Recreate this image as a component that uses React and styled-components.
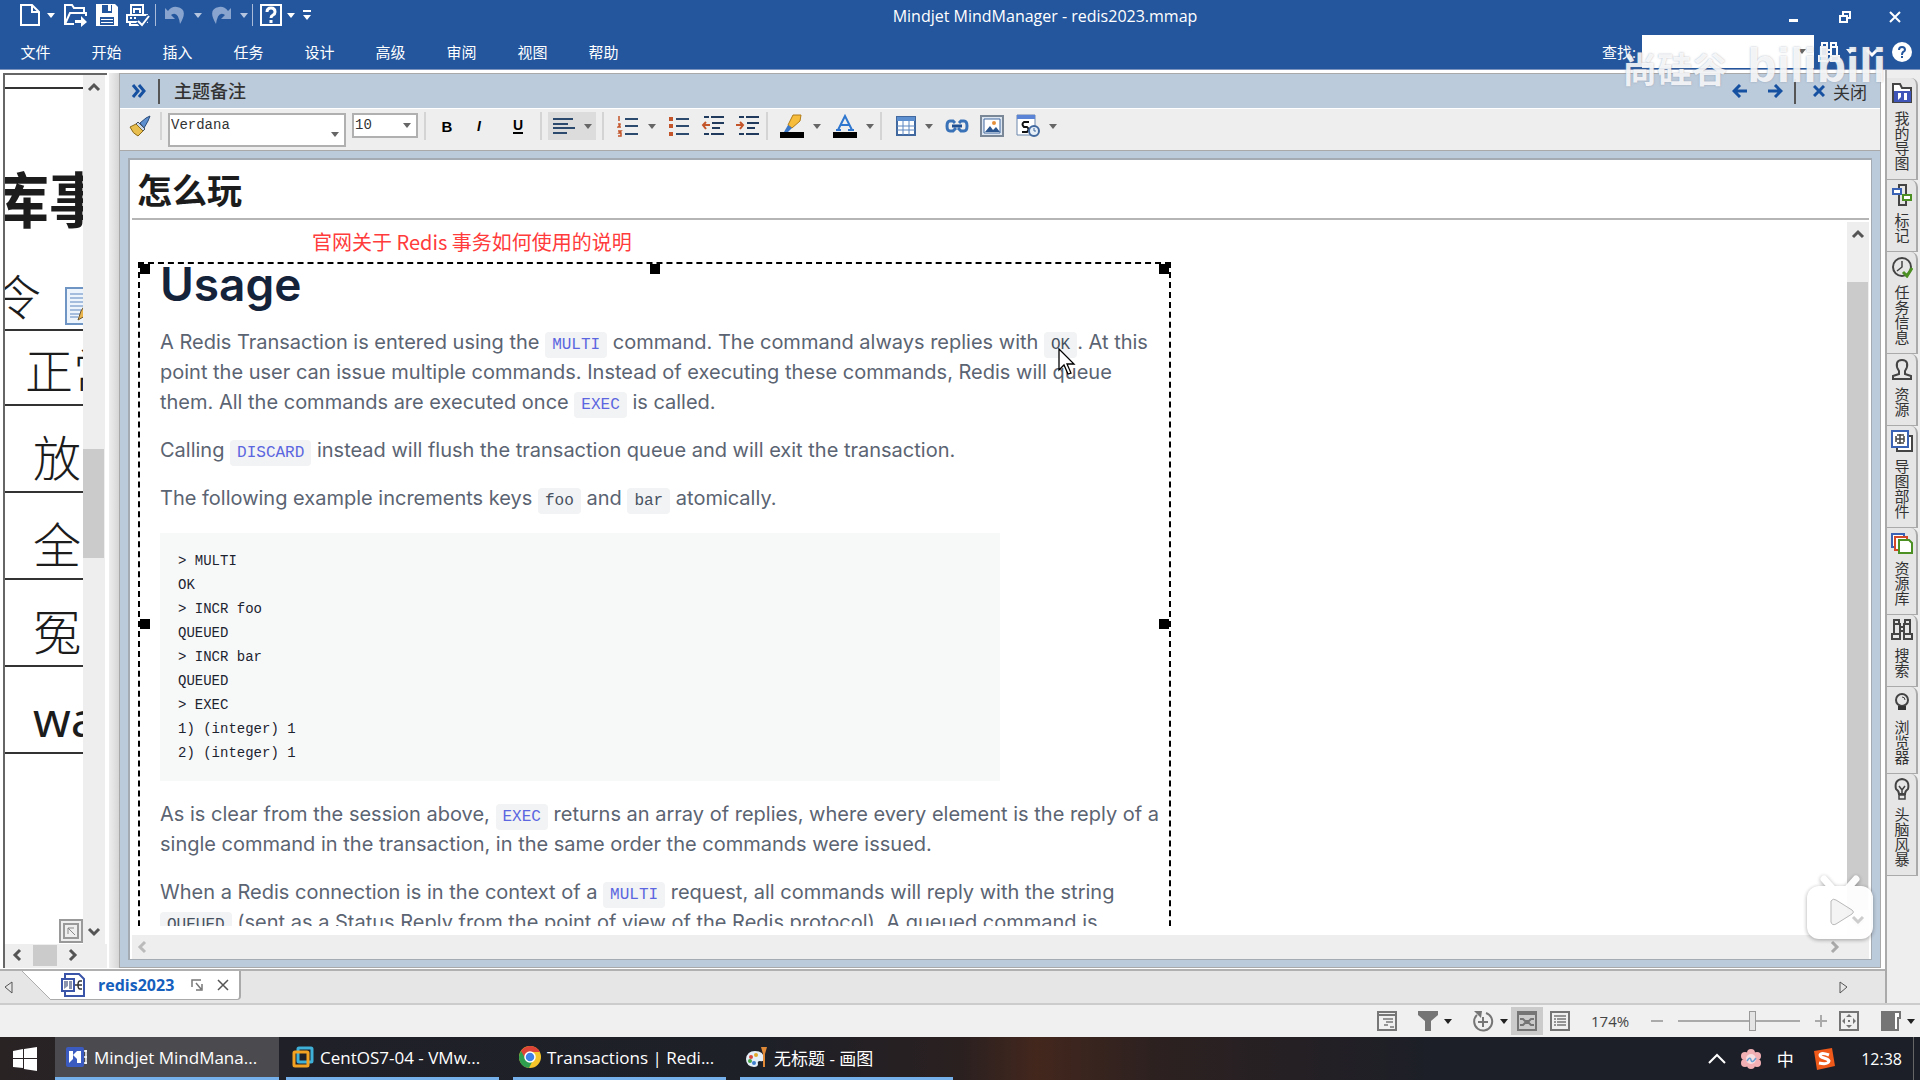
import React from 'react'
import styled, { createGlobalStyle } from 'styled-components'

const ui = '"Open Sans", "Noto Sans CJK SC", sans-serif'
const mono = '"Liberation Mono", "Noto Sans CJK SC", monospace'

export default function App() {
  return (
    <Page>
      <GlobalStyle />
      <TopBar />
      <Workspace>
        <Main>
          <Panes>
            <MapPane />
            <Splitter />
            <NotesPane />
          </Panes>
          <TabStrip />
        </Main>
        <SideTabs />
      </Workspace>
      <StatusBar />
      <TaskBar />
    </Page>
  )
}

function Caret({ color = '#666' }) {
  return (
    <svg width="8" height="5" viewBox="0 0 8 5"><path d="M0 0h8L4 5z" fill={color} /></svg>
  )
}

function Chevron({ dir = 'up', color = '#555' }) {
  const d = {
    up: 'M2 9l5-5 5 5',
    down: 'M2 5l5 5 5-5',
    left: 'M9 2L4 7l5 5',
    right: 'M5 2l5 5-5 5',
  }[dir]
  return (
    <svg width="14" height="14" viewBox="0 0 14 14"><path d={d} fill="none" stroke={color} strokeWidth="3" /></svg>
  )
}

/* ---------- title and menu ---------- */

const menus = ['文件', '开始', '插入', '任务', '设计', '高级', '审阅', '视图', '帮助']

function TopBar() {
  return (
    <Header>
      <TitleRow>
        <Quick>
          <QuickBtn w={24} aria-label="新建">
            <svg width="22" height="24" viewBox="0 0 22 24"><path d="M2 2h11l7 7v13H2zM13 2v7h7" fill="none" stroke="#fff" strokeWidth="2" /></svg>
          </QuickBtn>
          <QuickBtn w={18} aria-label="新建选项"><Caret color="#fff" /></QuickBtn>
          <QuickBtn w={31} aria-label="打开">
            <svg width="25" height="24" viewBox="0 0 25 24">
              <path d="M11 21H2V2h7l2 3h10v5M2 21l5-11h16v3" fill="none" stroke="#fff" strokeWidth="2" />
              <path d="M12 17h6v-4l6 6-6 5v-4h-6z" fill="#fff" />
            </svg>
          </QuickBtn>
          <QuickBtn w={31} aria-label="保存">
            <svg width="24" height="24" viewBox="0 0 24 24">
              <path d="M1 1h19l3 3v19H1z" fill="#fff" />
              <path d="M7 2h10v8H7zM5 14h14v8H5z" fill="#24569d" />
              <path d="M13 2h3v6h-3zM6 16h12v1H6zM6 19h12v1H6z" fill="#fff" />
            </svg>
          </QuickBtn>
          <QuickBtn w={31} aria-label="打印">
            <svg width="25" height="24" viewBox="0 0 25 24">
              <path d="M6 11V2h12v9M9 10V6h6v4M2 12h20v7H2zM5 19v3h9M5 15h2M9 15h2" fill="none" stroke="#fff" strokeWidth="2" />
              <path d="M13 18l4 4 7-9" fill="none" stroke="#24569d" strokeWidth="5" />
              <path d="M13 18l4 4 7-9" fill="none" stroke="#fff" strokeWidth="2" />
            </svg>
          </QuickBtn>
          <QuickSep />
          <QuickBtn w={34} aria-label="撤消">
            <svg width="22" height="20" viewBox="0 0 22 20"><path d="M1 3v11h10L7 10q7-5 9 9 9-15-3-17-5-1-9 4z" fill="#89a5cf" /></svg>
          </QuickBtn>
          <QuickBtn w={12} aria-label="撤消选项"><Caret color="#b5c5e0" /></QuickBtn>
          <QuickBtn w={34} aria-label="恢复">
            <svg width="22" height="20" viewBox="0 0 22 20"><path d="M21 3v11H11l4-4Q8 5 6 19-3 4 9 2q5-1 9 4z" fill="#89a5cf" /></svg>
          </QuickBtn>
          <QuickBtn w={12} aria-label="恢复选项"><Caret color="#b5c5e0" /></QuickBtn>
          <QuickSep />
          <QuickBtn w={32} aria-label="帮助主题">
            <svg width="24" height="24" viewBox="0 0 24 24">
              <path d="M2 2h20v20H2z" fill="none" stroke="#fff" strokeWidth="2" />
              <path d="M8 9q0-4 4-4t4 4q0 2-2 3t-2 3M12 17v3" fill="none" stroke="#fff" strokeWidth="3" />
            </svg>
          </QuickBtn>
          <QuickBtn w={8} aria-label="帮助选项"><Caret color="#fff" /></QuickBtn>
          <QuickBtn w={24} aria-label="自定义工具栏">
            <svg width="8" height="10" viewBox="0 0 8 10"><path d="M0 0h8v2H0zM0 5h8L4 10z" fill="#fff" /></svg>
          </QuickBtn>
        </Quick>
        <AppTitle>Mindjet MindManager - redis2023.mmap</AppTitle>
        <WinBtn aria-label="最小化">
          <svg width="14" height="14" viewBox="0 0 14 14"><path d="M1 9h9v3H1z" fill="#fff" /></svg>
        </WinBtn>
        <WinBtn aria-label="还原">
          <svg width="14" height="14" viewBox="0 0 14 14"><path d="M2 6h7v6H2zM5 5V2h7v6H9" fill="none" stroke="#fff" strokeWidth="2" /></svg>
        </WinBtn>
        <WinBtn aria-label="关闭窗口">
          <svg width="14" height="14" viewBox="0 0 14 14"><path d="M2 2l10 10M12 2L2 12" stroke="#fff" strokeWidth="2" /></svg>
        </WinBtn>
      </TitleRow>
      <MenuRow>
        <Menu>
          {menus.map((m) => <MenuItem key={m}>{m}</MenuItem>)}
        </Menu>
        <FindLabel htmlFor="find">查找:</FindLabel>
        <FindBox>
          <FindInput id="find" type="text" />
          <FindCaret><Caret /></FindCaret>
        </FindBox>
        <QuickBtn w={30} aria-label="搜索">
          <svg width="22" height="22" viewBox="0 0 22 22">
            <path d="M4 2h5v4H4zM13 2h5v4h-5zM3 6h6v9H3zM13 6h6v9h-6zM1 15h8v5H1zM13 15h8v5h-8zM9 9h4v4H9z" fill="none" stroke="#fff" strokeWidth="2" />
          </svg>
        </QuickBtn>
        <QuickBtn w={12} aria-label="搜索选项"><Caret color="#fff" /></QuickBtn>
        <QuickBtn w={32} aria-label="折叠功能区"><Chevron dir="down" color="#fff" /></QuickBtn>
        <QuickBtn w={28} aria-label="帮助">
          <svg width="20" height="20" viewBox="0 0 20 20">
            <circle cx="10" cy="10" r="10" fill="#fff" />
            <path d="M7 8q0-3 3-3t3 3q0 1-2 2-1 1-1 3M10 14v2" fill="none" stroke="#24569d" strokeWidth="2" />
          </svg>
        </QuickBtn>
      </MenuRow>
      <Watermark>
        <Author>尚硅谷</Author>
        <Brand>bilibili</Brand>
      </Watermark>
    </Header>
  )
}

/* ---------- map on the left ---------- */

function MapPane() {
  return (
    <Map>
      <MapBody>
        <MapView>
          <MapRow h={14} />
          <MapRow h={242}>
            <MapTitle>库事</MapTitle>
            <MapSub>
              令
              <svg width="30" height="38" viewBox="0 0 30 38">
                <path d="M1 1h28v36H1z" fill="#eef4fb" stroke="#6f95c4" strokeWidth="2" />
                <path d="M5 7h20M5 11h20M5 15h20M5 19h18M5 23h14M5 27h10M5 30h8" stroke="#5b86c0" />
                <path d="M13 33l3-9 8-12 5 4-9 13z" fill="#e9b44c" stroke="#6b5530" />
              </svg>
            </MapSub>
          </MapRow>
          <MapRow h={75} x={20}>正常</MapRow>
          <MapRow h={87} x={28} low>放</MapRow>
          <MapRow h={87} x={28} low>全</MapRow>
          <MapRow h={87} x={28} low>冤</MapRow>
          <MapRow h={87} x={28} low latin>wa</MapRow>
          <Overview aria-label="导航">
            <svg width="24" height="24" viewBox="0 0 24 24">
              <path d="M1 1h22v22H1zM5 5h14v14H5z" fill="#eee" stroke="#999" strokeWidth="2" />
              <path d="M9 15V9h6M9 9l7 7" fill="none" stroke="#888" strokeWidth="1" />
            </svg>
          </Overview>
        </MapView>
        <VScroll>
          <ScrollBtn aria-label="向上滚动"><Chevron dir="up" /></ScrollBtn>
          <Space n={347} />
          <Thumb n={108} />
          <Space n={359} />
          <ScrollBtn aria-label="向下滚动"><Chevron dir="down" /></ScrollBtn>
        </VScroll>
      </MapBody>
      <MapHScroll>
        <ScrollBtn aria-label="向左滚动"><Chevron dir="left" /></ScrollBtn>
        <HThumb />
        <ScrollBtn aria-label="向右滚动"><Chevron dir="right" /></ScrollBtn>
      </MapHScroll>
    </Map>
  )
}

/* ---------- notes ---------- */

function NotesPane() {
  return (
    <Notes>
      <NotesHead>
        <HeadBtn w={38} aria-label="展开">
          <svg width="16" height="14" viewBox="0 0 16 14"><path d="M2 1l5 6-5 6M8 1l5 6-5 6" fill="none" stroke="#1650a0" strokeWidth="3" /></svg>
        </HeadBtn>
        <HeadSep />
        <HeadTitle>主题备注</HeadTitle>
        <HeadBtn w={32} aria-label="后退">
          <svg width="16" height="14" viewBox="0 0 16 14"><path d="M15 7H3M8 1L2 7l6 6" fill="none" stroke="#1650a0" strokeWidth="3" /></svg>
        </HeadBtn>
        <HeadBtn w={38} aria-label="前进">
          <svg width="16" height="14" viewBox="0 0 16 14"><path d="M1 7h12M8 1l6 6-6 6" fill="none" stroke="#1650a0" strokeWidth="3" /></svg>
        </HeadBtn>
        <HeadSep />
        <CloseBtn>
          <svg width="12" height="12" viewBox="0 0 12 12"><path d="M1 1l10 10M11 1L1 11" stroke="#1650a0" strokeWidth="3" /></svg>
          关闭
        </CloseBtn>
      </NotesHead>
      <FormatBar />
      <Frame>
        <Sheet>
          <TopicTitle>怎么玩</TopicTitle>
          <SheetBody>
            <Document />
            <VScroll>
              <ScrollBtn aria-label="备注向上滚动"><Chevron dir="up" /></ScrollBtn>
              <Space n={33} />
              <Thumb n={581} />
              <Grow />
              <ScrollBtn aria-label="备注向下滚动"><Chevron dir="down" color="#bbb" /></ScrollBtn>
            </VScroll>
          </SheetBody>
          <SheetHScroll>
            <ScrollBtn aria-label="备注向左滚动"><Chevron dir="left" color="#bbb" /></ScrollBtn>
            <ScrollBtn aria-label="备注向右滚动"><Chevron dir="right" color="#aaa" /></ScrollBtn>
          </SheetHScroll>
          <Player viewBox="0 0 72 68">
            <path d="M20 4l8 9M52 4l-8 9" stroke="#fff" strokeWidth="7" strokeLinecap="round" />
            <rect x="3" y="11" width="66" height="53" rx="12" fill="#fff" />
            <path d="M27 26q2-3 5-1l16 10q3 2 0 4L32 49q-4 2-5-2z" fill="#f4f4f4" stroke="#b5b5b5" strokeWidth="1" />
            <path d="M49 42l5 5 5-5" fill="none" stroke="#ccc" strokeWidth="3" />
          </Player>
        </Sheet>
      </Frame>
    </Notes>
  )
}

function FormatBar() {
  return (
    <Format>
      <Tool w={40} aria-label="格式刷">
        <svg width="22" height="22" viewBox="0 0 22 22">
          <path d="M21 1l-4 2-6 5 4 5 4-7z" fill="#5b8fd0" stroke="#2a4a78" />
          <path d="M9 7l7 7-2 2-7-7z" fill="#c9d8ea" stroke="#44505e" />
          <path d="M7 9l7 7-5 5q-5-2-8-9z" fill="#e8be4e" stroke="#8a6a1c" />
        </svg>
      </Tool>
      <Sep />
      <Picker w={178} tall>
        <PickerSelect aria-label="字体" tall><option>Verdana</option></PickerSelect>
        <PickerCaret><Caret /></PickerCaret>
      </Picker>
      <Picker w={66}>
        <PickerSelect aria-label="字号"><option>10</option></PickerSelect>
        <PickerCaret><Caret /></PickerCaret>
      </Picker>
      <Sep />
      <Tool w={30} aria-label="粗体"><Bold>B</Bold></Tool>
      <Tool w={34} aria-label="斜体"><Italic>I</Italic></Tool>
      <Tool w={44} aria-label="下划线"><Under>U</Under></Tool>
      <Sep />
      <Tool w={48} active aria-label="对齐">
        <svg width="22" height="18" viewBox="0 0 22 18"><path d="M0 2h20M0 7h15M0 11h22M0 16h14" stroke="#2b4a6e" strokeWidth="2" /></svg>
        <Caret />
      </Tool>
      <Sep />
      <Tool w={52} aria-label="编号列表">
        <svg width="22" height="22" viewBox="0 0 22 22">
          <path d="M2 1v5M1 9h2v1l-2 2h3M1 16h3l-2 2h2v3H1" fill="none" stroke="#c4552b" strokeWidth="1.5" />
          <path d="M8 4h13M8 11h13M8 19h13" stroke="#2b4a6e" strokeWidth="2" />
        </svg>
        <Caret />
      </Tool>
      <Tool w={34} aria-label="项目符号">
        <svg width="22" height="22" viewBox="0 0 22 22">
          <path d="M1 2h4v4H1zM1 9h4v4H1zM1 17h4v4H1z" fill="#c4552b" />
          <path d="M8 4h13M8 11h13M8 19h13" stroke="#2b4a6e" strokeWidth="2" />
        </svg>
      </Tool>
      <Tool w={34} aria-label="减少缩进">
        <svg width="24" height="22" viewBox="0 0 24 22">
          <path d="M3 2h5M10 2h13M11 8h12M11 13h8M3 19h5M10 19h13" stroke="#1f3a5c" strokeWidth="2" />
          <path d="M9 10H2M5 7l-3 3 3 4" fill="none" stroke="#c4552b" strokeWidth="2" />
        </svg>
      </Tool>
      <Tool w={36} aria-label="增加缩进">
        <svg width="24" height="22" viewBox="0 0 24 22">
          <path d="M3 2h5M10 2h13M11 8h12M11 13h8M3 19h5M10 19h13" stroke="#1f3a5c" strokeWidth="2" />
          <path d="M0 10h7M4 7l3 3-3 4" fill="none" stroke="#c4552b" strokeWidth="2" />
        </svg>
      </Tool>
      <Sep />
      <Tool w={52} aria-label="突出显示">
        <svg width="24" height="24" viewBox="0 0 24 24">
          <path d="M13 1h8l-1 6-8 7-4-3z" fill="#f6bd3c" stroke="#b07c18" />
          <path d="M8 11l4 3-4 4H4z" fill="#3c78c8" />
          <path d="M0 18h24v6H0z" />
        </svg>
        <Caret />
      </Tool>
      <Tool w={54} aria-label="字体颜色">
        <svg width="24" height="24" viewBox="0 0 24 24">
          <path d="M5 16l7-14 7 14M8 11h8M3 16h5M15 16h6" fill="none" stroke="#2f76cf" strokeWidth="2" />
          <path d="M0 18h24v6H0z" />
        </svg>
        <Caret />
      </Tool>
      <Sep />
      <Tool w={52} aria-label="表格">
        <svg width="20" height="20" viewBox="0 0 20 20">
          <path d="M1 1h18v18H1z" fill="#fff" stroke="#41699f" strokeWidth="2" />
          <path d="M1 1h18v4H1z" fill="#5b8fd0" />
          <path d="M1 10h18M1 14h18M7 5v14M13 5v14" stroke="#5b86c0" />
        </svg>
        <Caret />
      </Tool>
      <Tool w={34} aria-label="链接">
        <svg width="24" height="14" viewBox="0 0 24 14">
          <path d="M10 4L8 2H5Q2 2 2 7t3 5h3l3-3M14 4l2-2h3q3 0 3 5t-3 5h-3l-3-3" fill="none" stroke="#3a72b8" strokeWidth="3" />
          <path d="M7 7h10" stroke="#1f4f93" strokeWidth="3" />
        </svg>
      </Tool>
      <Tool w={36} aria-label="图像">
        <svg width="24" height="22" viewBox="0 0 24 22">
          <path d="M1 1h22v20H1z" fill="#dce6f2" stroke="#7a8796" strokeWidth="2" />
          <path d="M4 4h16v14H4z" fill="#fff" stroke="#41699f" />
          <circle cx="14" cy="8" r="2" fill="#e58f3a" />
          <path d="M5 17l5-6 3 4 3-3 4 5z" fill="#2b5690" />
        </svg>
      </Tool>
      <Tool w={52} aria-label="日期和时间">
        <svg width="24" height="24" viewBox="0 0 24 24">
          <path d="M1 1h18v20H1z" fill="#fff" stroke="#6d87ae" />
          <path d="M1 1h18v4H1z" fill="#5b84d6" />
          <path d="M13 8H8q-3 2 0 5h3q3 2 0 5H6" fill="none" stroke="#111" strokeWidth="2" />
          <circle cx="18" cy="17" r="5" fill="#e6eef8" stroke="#41699f" strokeWidth="2" />
          <path d="M18 14v3h2" fill="none" stroke="#41699f" />
        </svg>
        <Caret />
      </Tool>
    </Format>
  )
}

const session = `> MULTI
OK
> INCR foo
QUEUED
> INCR bar
QUEUED
> EXEC
1) (integer) 1
2) (integer) 1`

function Document() {
  return (
    <Doc>
      <RedNote>官网关于 Redis 事务如何使用的说明</RedNote>
      <Clip>
        <Heading>Usage</Heading>
        <Para>
          A Redis Transaction is entered using the <Code link>MULTI</Code> command. The command always replies with <Code>OK</Code>. At this<br />
          point the user can issue multiple commands. Instead of executing these commands, Redis will queue<br />
          them. All the commands are executed once <Code link>EXEC</Code> is called.
        </Para>
        <Para>Calling <Code link>DISCARD</Code> instead will flush the transaction queue and will exit the transaction.</Para>
        <Para>The following example increments keys <Code>foo</Code> and <Code>bar</Code> atomically.</Para>
        <Session>{session}</Session>
        <Para>
          As is clear from the session above, <Code link>EXEC</Code> returns an array of replies, where every element is the reply of a<br />
          single command in the transaction, in the same order the commands were issued.
        </Para>
        <Para>
          When a Redis connection is in the context of a <Code link>MULTI</Code> request, all commands will reply with the string<br />
          <Code>QUEUED</Code> (sent as a Status Reply from the point of view of the Redis protocol). A queued command is
        </Para>
        <Handle x={0} y={0} /><Handle x={0.5} y={0} /><Handle x={1} y={0} />
        <Handle x={0} y={0.5} /><Handle x={1} y={0.5} />
        <Pointer viewBox="0 0 18 28">
          <path d="M1 1v21l5-5 4 9 3-1-4-9h7z" fill="#fff" stroke="#000" strokeWidth="1.3" />
        </Pointer>
      </Clip>
    </Doc>
  )
}

/* ---------- tabs along the right edge ---------- */

const sideTabs = [
  ['我的导图', <><path d="M2 20V2h7l2 4h9v14z" fill="#fff" stroke="#444" strokeWidth="2" /><path d="M3 9h17v11H3z" fill="#3f55b8" /><path d="M7 11v7l3-3V11zM13 11v7h3v-7z" fill="#fff" /></>],
  ['标记', <><path d="M8 1h7v20H8z" fill="none" stroke="#444" strokeWidth="2" /><path d="M2 5h8v5H2z" fill="#fff" stroke="#3a62b5" strokeWidth="2" /><path d="M12 11h8v5h-8z" fill="#fff" stroke="#4c8f22" strokeWidth="2" /></>],
  ['任务信息', <><circle cx="11" cy="11" r="9" fill="none" stroke="#444" strokeWidth="2" /><path d="M11 5v6l-5 4" fill="none" stroke="#444" strokeWidth="1.5" /><path d="M12 16l4 4 5-8" fill="none" stroke="#4c8f22" strokeWidth="3" /></>],
  ['资源', <path d="M8 13q-3-4-2-8 1-3 5-3t5 3q1 4-2 8v3l6 2v3H2v-3l6-2z" fill="none" stroke="#444" strokeWidth="2" />],
  ['导图部件', <><path d="M6 6h15v15H6z" fill="#fff" stroke="#444" strokeWidth="2" /><path d="M1 1h16v16H1z" fill="#fff" stroke="#3a62b5" strokeWidth="2" /><path d="M6 5h7M5 9h8M6 13h7M5 6v6M9 4v10M13 6v6" stroke="#444" strokeWidth="1.5" /></>],
  ['资源库', <><path d="M1 2h12v13H1z" fill="#fff" stroke="#3a62b5" strokeWidth="2" /><path d="M4 5h12v13H4z" fill="#fff" stroke="#d24a2a" strokeWidth="2" /><path d="M8 8h10l3 3v10H8z" fill="#fff" stroke="#4c8f22" strokeWidth="2" /></>],
  ['搜索', <path d="M3 1h5v4H3zM14 1h5v4h-5zM3 5h6v10H3zM13 5h6v10h-6zM1 15h8v5H1zM13 15h8v5h-8zM9 8h4v4H9z" fill="none" stroke="#444" strokeWidth="2" />],
  ['浏览器', <><circle cx="11" cy="9" r="6" fill="none" stroke="#444" strokeWidth="2" /><path d="M11 6q3 0 3 3" fill="none" stroke="#444" /><path d="M7 15h8v4H7z" fill="#333" /></>],
  ['头脑风暴', <><path d="M8 16q0-3-3-5-2-9 6-10 8 1 6 10-3 2-3 5z" fill="none" stroke="#444" strokeWidth="2" /><path d="M8 8l3 4 3-4M11 12v4M8 17h6v4H8z" fill="none" stroke="#444" strokeWidth="1.5" /></>],
]

function SideTabs() {
  return (
    <Side>
      {sideTabs.map(([name, icon]) => (
        <SideTab key={name}>
          <svg width="22" height="22" viewBox="0 0 22 22">{icon}</svg>
          <SideName>{name}</SideName>
        </SideTab>
      ))}
    </Side>
  )
}

function TabStrip() {
  return (
    <Strip>
      <StripBtn w={22} aria-label="上一个标签">
        <svg width="9" height="13" viewBox="0 0 9 13"><path d="M8 1v11L1 6z" fill="none" stroke="#555" /></svg>
      </StripBtn>
      <Slant viewBox="0 0 30 30"><path d="M0 0h30v30z" fill="#fff" /><path d="M0 0l30 30" stroke="#aaa" /></Slant>
      <DocTab>
        <svg width="24" height="24" viewBox="0 0 24 24">
          <path d="M4 1h14l5 5v17H4z" fill="#fff" stroke="#3a55a8" strokeWidth="2" />
          <path d="M1 6h12v12H1z" fill="#fff" stroke="#3a55a8" strokeWidth="2" />
          <path d="M3 8v8l4-3V8zM8 8v8h3V8z" fill="#8a93ad" />
          <path d="M14 12h3M21 8h-2q-2 0-2 4t2 4h2M17 12h4" fill="none" stroke="#333" strokeWidth="1.5" />
        </svg>
        <DocName>redis2023</DocName>
        <svg width="12" height="12" viewBox="0 0 12 12"><path d="M1 8V1h9M5 4l5 6M11 5v6H5" fill="none" stroke="#777" strokeWidth="1.5" /></svg>
        <TabClose aria-label="关闭标签">
          <svg width="12" height="12" viewBox="0 0 12 12"><path d="M1 1l10 10M11 1L1 11" stroke="#555" strokeWidth="1.5" /></svg>
        </TabClose>
      </DocTab>
      <Grow />
      <StripBtn w={50} aria-label="下一个标签">
        <svg width="9" height="13" viewBox="0 0 9 13"><path d="M1 1v11l7-6z" fill="none" stroke="#555" /></svg>
      </StripBtn>
    </Strip>
  )
}

function StatusBar() {
  return (
    <Status>
      <StatusBtn w={28} aria-label="备注">
        <svg width="20" height="20" viewBox="0 0 20 20"><path d="M1 1h18v18H1zM1 4h18" fill="none" stroke="#777" strokeWidth="2" /><path d="M6 8h10M9 11h7M7 14h4M13 16h4" stroke="#777" strokeWidth="1.5" /></svg>
      </StatusBtn>
      <StatusBtn w={68} aria-label="筛选">
        <svg width="20" height="20" viewBox="0 0 20 20"><path d="M0 0h20v4l-7 6v10H7V10L0 4z" fill="#757575" /></svg>
        <Caret color="#222" />
      </StatusBtn>
      <StatusBtn w={42} aria-label="展开级别">
        <svg width="22" height="22" viewBox="0 0 22 22">
          <path d="M14 3a9 9 0 1 1-9 2M11 7v10M6 12h10" fill="none" stroke="#757575" strokeWidth="2" />
          <path d="M2 1h8l-1 7z" fill="#757575" />
        </svg>
        <Caret color="#222" />
      </StatusBtn>
      <StatusBtn w={32} active aria-label="导图视图">
        <svg width="20" height="20" viewBox="0 0 20 20"><path d="M1 1h18v18H1zM1 3h18" fill="none" stroke="#757575" strokeWidth="2" /><path d="M3 8h3l2 2h4l2-2h3M3 14h3l2-2h4l2 2h3" fill="none" stroke="#757575" strokeWidth="2" /><path d="M8 9h4v4H8z" fill="#757575" /></svg>
      </StatusBtn>
      <StatusBtn w={34} aria-label="大纲视图">
        <svg width="20" height="20" viewBox="0 0 20 20"><path d="M1 1h18v18H1z" fill="none" stroke="#757575" strokeWidth="2" /><path d="M4 5h12M4 8h2M7 8h9M4 11h2M7 11h9M4 14h2M7 14h9" stroke="#757575" strokeWidth="1.5" /></svg>
      </StatusBtn>
      <Percent htmlFor="zoom">174%</Percent>
      <StatusBtn w={28} aria-label="缩小"><svg width="12" height="12" viewBox="0 0 12 12"><path d="M0 6h12" stroke="#aaa" strokeWidth="2" /></svg></StatusBtn>
      <Slider id="zoom" type="range" min="0" max="100" defaultValue="62" />
      <StatusBtn w={28} aria-label="放大"><svg width="12" height="12" viewBox="0 0 12 12"><path d="M0 6h12M6 0v12" stroke="#aaa" strokeWidth="2" /></svg></StatusBtn>
      <StatusBtn w={28} aria-label="适合页面">
        <svg width="20" height="20" viewBox="0 0 20 20"><path d="M1 1h18v18H1z" fill="none" stroke="#757575" strokeWidth="2" /><path d="M10 3l3 3H7zM10 17l3-3H7zM3 10l3-3v6zM17 10l-3-3v6zM9 9h2v2H9z" fill="#757575" /></svg>
      </StatusBtn>
      <StatusGap />
      <StatusBtn w={44} aria-label="任务窗格">
        <svg width="20" height="20" viewBox="0 0 20 20"><path d="M0 0h12v20H0z" fill="#757575" /><path d="M13 1h6v6h-2v12h-4z" fill="#fff" stroke="#757575" strokeWidth="2" /></svg>
        <Caret color="#222" />
      </StatusBtn>
    </Status>
  )
}

function TaskBar() {
  return (
    <Tasks>
      <Start aria-label="开始菜单">
        <svg width="24" height="24" viewBox="0 0 24 24"><path d="M0 4l10-2v9H0zM11 2l13-2v11H11zM0 12h10v9L0 20zM11 12h13v12l-13-2z" fill="#fff" /></svg>
      </Start>
      <Task active>
        <svg width="22" height="22" viewBox="0 0 22 22"><rect y="1" width="18" height="20" rx="2" fill="#3b5bc0" /><path d="M3 5v12l4-4V5zM11 5v12h4V5zM7 9l4-4v8z" fill="#fff" /><path d="M18 5h3M18 11h3M18 17h3M20 4v14" stroke="#fff" strokeWidth="1.5" /></svg>
        Mindjet MindMana...
      </Task>
      <Task>
        <svg width="22" height="22" viewBox="0 0 22 22"><rect x="6" y="2" width="14" height="14" rx="1" fill="none" stroke="#3fb0d8" strokeWidth="3" /><rect x="2" y="6" width="14" height="14" rx="1" fill="none" stroke="#f3a321" strokeWidth="3" /></svg>
        CentOS7-04 - VMw...
      </Task>
      <Task>
        <svg width="22" height="22" viewBox="0 0 22 22">
          <circle cx="11" cy="11" r="11" fill="#f6c52b" />
          <path d="M11 11L6 21A11 11 0 0 1 2 5z" fill="#2f9e4f" />
          <path d="M2 5a11 11 0 0 1 19 1H11l-5 8z" fill="#dd4437" />
          <path d="M6 21L2 5l5 9 6 2-3 6z" fill="#2f9e4f" />
          <circle cx="11" cy="11" r="5" fill="#3f7fe8" stroke="#fff" strokeWidth="1.5" />
        </svg>
        Transactions | Redi...
      </Task>
      <Task>
        <svg width="22" height="22" viewBox="0 0 22 22">
          <path d="M9 5q9 0 9 8 0 3-4 2-3 0-2 3 0 3-4 3-8-1-8-8 1-8 9-8z" fill="#e4eef7" />
          <circle cx="5" cy="11" r="2" fill="#d9463b" /><circle cx="10" cy="9" r="2" fill="#e0a92d" /><circle cx="4" cy="15" r="2" fill="#48a548" /><circle cx="8" cy="17" r="2" fill="#3f7fd0" />
          <path d="M15 1h6l-2 7v13h-2V8z" fill="#e08a38" />
        </svg>
        无标题 - 画图
      </Task>
      <Grow />
      <Tray>
        <TrayBtn w={28} aria-label="显示隐藏的图标">
          <svg width="18" height="12" viewBox="0 0 18 12"><path d="M1 10l8-8 8 8" fill="none" stroke="#fff" strokeWidth="2" /></svg>
        </TrayBtn>
        <TrayBtn w={40} aria-label="输入法助手">
          <svg width="22" height="22" viewBox="0 0 22 22">
            <g fill="#f2b0b4"><circle cx="11" cy="5" r="4" /><circle cx="5" cy="8" r="4" /><circle cx="5" cy="15" r="4" /><circle cx="11" cy="17" r="4" /><circle cx="17" cy="15" r="4" /><circle cx="17" cy="8" r="4" /></g>
            <circle cx="11" cy="11" r="5" fill="#f7dfe2" /><path d="M7 13q3-5 4-1t5-2" fill="none" stroke="#6a9fd0" strokeWidth="1.5" />
          </svg>
        </TrayBtn>
        <TrayBtn w={28} aria-label="输入语言">中</TrayBtn>
        <TrayBtn w={50} aria-label="搜狗输入法">
          <svg width="22" height="22" viewBox="0 0 22 22"><path d="M1 3l18-3 3 18-18 4z" fill="#ef5a1a" /><path d="M16 7q-8-3-9 0 0 2 4 3t5 3q-1 4-10 2" fill="none" stroke="#fff" strokeWidth="3" /></svg>
        </TrayBtn>
        <Clock dateTime="12:38">12:38</Clock>
      </Tray>
    </Tasks>
  )
}

// styled-components

const GlobalStyle = createGlobalStyle`
  * { box-sizing: border-box; }
  body { margin: 0; font-family: ${ui}; }
  button {
    border: 0;
    padding: 0;
    background: none;
    font-family: inherit;
    color: inherit;
  }
  svg { display: block; flex-shrink: 0; }
`
const clean = (...names) => ({ shouldForwardProp: (p) => !names.includes(p) })

const Page = styled.div`
  height: 100vh;
  display: flex;
  flex-direction: column;
  overflow: hidden;
`
const Grow = styled.div`
  flex: 1;
`
const Header = styled.header`
  position: relative;
  flex-shrink: 0;
  color: #fff;
  background: #24569d;
  border-bottom: 1px solid #7c93bd;
`
const TitleRow = styled.div`
  display: flex;
  height: 34px;
`
const Quick = styled.div`
  display: flex;
  align-items: center;
  width: 320px;
  height: 30px;
  padding-left: 18px;
`
const QuickBtn = styled.button.withConfig(clean('w'))`
  width: ${(p) => p.w}px;
  display: flex;
  align-items: center;
  justify-content: center;
`
const QuickSep = styled.div`
  width: 1px;
  height: 22px;
  margin: 0 2px;
  background: #a9bbd9;
`
const AppTitle = styled.div`
  flex: 1;
  text-align: center;
  font-size: 16px;
  line-height: 32px;
`
const WinBtn = styled.button`
  width: 50px;
  display: flex;
  align-items: center;
  justify-content: center;
`
const MenuRow = styled.div`
  display: flex;
  align-items: center;
  height: 35px;
  padding-right: 4px;
`
const Menu = styled.nav`
  flex: 1;
  display: flex;
  gap: 40px;
  padding-left: 20px;
`
const MenuItem = styled.button`
  width: 31px;
  font-size: 15px;
  white-space: nowrap;
`
const FindLabel = styled.label`
  font-size: 15px;
  margin-right: 6px;
`
const FindBox = styled.div`
  position: relative;
  width: 172px;
  height: 33px;
`
const FindInput = styled.input`
  width: 100%;
  height: 100%;
  border: 0;
  background: #fff;
`
const FindCaret = styled.span`
  position: absolute;
  right: 8px;
  top: 14px;
`
const Watermark = styled.div`
  position: absolute;
  z-index: 2;
  right: 34px;
  top: 30px;
  display: flex;
  align-items: center;
  gap: 20px;
  color: rgba(255, 255, 255, 0.85);
  text-shadow: 0 0 2px rgba(120, 130, 150, 0.6);
  line-height: 64px;
`
const Author = styled.span`
  font-size: 35px;
  font-weight: bold;
  padding-top: 8px;
`
const Brand = styled.span`
  font: bold 48px/64px "Liberation Sans", sans-serif;
`
const Workspace = styled.div`
  flex: 1;
  min-height: 0;
  display: flex;
  background: #eee;
`
const Main = styled.main`
  flex: 1;
  min-width: 0;
  display: flex;
  flex-direction: column;
  border-right: 2px solid #aaa;
`
const Panes = styled.div`
  flex: 1;
  min-height: 0;
  display: flex;
  background: #fff;
  padding: 3px 4px 1px 3px;
`
const Map = styled.section`
  width: 104px;
  display: flex;
  flex-direction: column;
  border-left: 2px solid #666;
  border-top: 2px solid #666;
`
const MapBody = styled.div`
  flex: 1;
  min-height: 0;
  display: flex;
`
const MapView = styled.div`
  position: relative;
  width: 78px;
  overflow: hidden;
  color: #1c1c1c;
`
const MapRow = styled.div.withConfig(clean('h', 'x', 'low', 'latin'))`
  height: ${(p) => p.h}px;
  padding-left: ${(p) => p.x || 0}px;
  border-bottom: 2px solid #333;
  font-family: "Noto Sans", "Noto Sans CJK SC", sans-serif;
  font-weight: ${(p) => (p.latin ? 400 : 300)};
  font-size: 48px;
  line-height: ${(p) => (p.low ? p.h + 16 : p.h + 4)}px;
  white-space: nowrap;
  overflow: hidden;
`
const MapTitle = styled.div`
  margin: 66px 0 0 -16px;
  font-size: 60px;
  line-height: 90px;
  font-weight: bold;
`
const MapSub = styled.div`
  display: flex;
  align-items: flex-end;
  gap: 24px;
  margin: 24px 0 0 -12px;
  line-height: 56px;
`
const Overview = styled.button`
  position: absolute;
  right: 0;
  bottom: 1px;
`
const VScroll = styled.div`
  width: 22px;
  display: flex;
  flex-direction: column;
  padding: 2px 0;
  background: #eee;
`
const ScrollBtn = styled.button`
  width: 22px;
  height: 22px;
  display: flex;
  align-items: center;
  justify-content: center;
`
const Space = styled.div.withConfig(clean('n'))`
  flex: ${(p) => p.n} 1 0;
`
const Thumb = styled.div.withConfig(clean('n'))`
  flex: ${(p) => p.n} 1 0;
  width: 21px;
  background: #cbcbcb;
`
const MapHScroll = styled.div`
  height: 24px;
  display: flex;
  align-items: center;
  gap: 4px;
  padding: 0 0 2px 2px;
  background: #eee;
`
const HThumb = styled.div`
  width: 24px;
  height: 21px;
  background: #cbcbcb;
`
const Splitter = styled.div`
  width: 12px;
  background: linear-gradient(90deg, #fff 2px, #eee 2px, #d6d6d6);
`
const Notes = styled.section`
  flex: 1;
  min-width: 0;
  display: flex;
  flex-direction: column;
  border: 1px solid #a9a9a9;
  background: #bccbdb;
`
const NotesHead = styled.div`
  height: 35px;
  display: flex;
  align-items: center;
  border-bottom: 1px solid #fff;
`
const HeadBtn = styled.button.withConfig(clean('w'))`
  width: ${(p) => p.w}px;
  display: flex;
  align-items: center;
  justify-content: center;
`
const HeadSep = styled.div`
  width: 2px;
  height: 25px;
  background: #555;
`
const HeadTitle = styled.h2`
  flex: 1;
  margin: 0 0 0 14px;
  font-size: 18px;
  line-height: 24px;
  font-weight: 500;
  color: #333;
`
const CloseBtn = styled.button`
  display: flex;
  align-items: center;
  gap: 8px;
  padding: 0 13px 0 17px;
  font-size: 17px;
  color: #333;
`
const Format = styled.div`
  height: 42px;
  display: flex;
  align-items: flex-start;
  padding-top: 3px;
  background: #eee;
  border-bottom: 1px solid #a9a9a9;
`
const Sep = styled.div`
  width: 2px;
  height: 28px;
  margin-right: 6px;
  background: #d4d4d4;
`
const Tool = styled.button.withConfig(clean('w', 'active'))`
  width: ${(p) => p.w}px;
  height: 28px;
  display: flex;
  align-items: center;
  justify-content: center;
  gap: 9px;
  margin-right: ${(p) => (p.active ? 6 : 0)}px;
  background: ${(p) => (p.active ? '#dcdcdc' : 'none')};
`
const Picker = styled.div.withConfig(clean('w', 'tall'))`
  position: relative;
  width: ${(p) => p.w}px;
  height: ${(p) => (p.tall ? 34 : 25)}px;
  margin-right: 6px;
`
const PickerSelect = styled.select.withConfig(clean('tall'))`
  width: 100%;
  height: 100%;
  appearance: none;
  border: 2px solid #b0b0b0;
  border-radius: 0;
  background: #fff;
  padding: 0 0 ${(p) => (p.tall ? 10 : 0)}px 1px;
  font: 14px ${mono};
  color: #333;
`
const PickerCaret = styled.span`
  position: absolute;
  right: 7px;
  bottom: 9px;
  pointer-events: none;
`
const Bold = styled.b`
  font: bold 15px "Liberation Sans", sans-serif;
`
const Italic = styled.i`
  font: italic bold 14px "Liberation Sans", sans-serif;
`
const Under = styled.span`
  font: bold 14px/14px "Liberation Sans", sans-serif;
  border-bottom: 2px solid #000;
`
const Frame = styled.div`
  flex: 1;
  min-height: 0;
  display: flex;
  padding: 7px 8px;
`
const Sheet = styled.article`
  position: relative;
  flex: 1;
  min-width: 0;
  display: flex;
  flex-direction: column;
  padding: 0 2px;
  border: 2px solid #a5abb3;
  border-right-width: 1px;
  border-bottom-width: 1px;
  background: #fff;
`
const TopicTitle = styled.h1`
  margin: 0;
  padding: 4px 0 0 5px;
  border-bottom: 2px solid #b5b5b5;
  font-size: 35px;
  line-height: 54px;
  font-weight: bold;
  color: #1c1c1c;
`
const SheetBody = styled.div`
  flex: 1;
  min-height: 0;
  display: flex;
  padding-top: 2px;
`
const SheetHScroll = styled.div`
  height: 24px;
  display: flex;
  align-items: center;
  justify-content: space-between;
  padding-right: 24px;
  background: #eee;
`
const Doc = styled.div`
  flex: 1;
  min-width: 0;
  display: flex;
  flex-direction: column;
  margin-bottom: 9px;
  overflow: hidden;
`
const RedNote = styled.p`
  margin: 5px 0 5px 180px;
  font: 20px/30px "Noto Sans CJK SC", sans-serif;
  color: #ff3b3b;
`
const Clip = styled.div`
  position: relative;
  align-self: flex-start;
  width: 1033px;
  height: 724px;
  flex-shrink: 0;
  margin-left: 6px;
  padding: 0 20px;
  border: 2px dashed #000;
  color: #5b6472;
`
const Heading = styled.h2`
  margin: 0 0 23px;
  font: 600 46px/40px Inter, sans-serif;
  color: #14233a;
`
const Para = styled.p`
  margin: 0 0 18px;
  font: 20px/30px Inter, sans-serif;
  white-space: nowrap;
`
const Code = styled.code.withConfig(clean('link'))`
  padding: 4px 7px;
  border-radius: 4px;
  background: #f2f3f4;
  font: 16px/18px ${mono};
  color: ${(p) => (p.link ? '#5b66e0' : '#465160')};
`
const Session = styled.pre`
  width: 840px;
  margin: 20px 0 18px;
  padding: 16px 18px;
  background: #f7f9f9;
  font: 14px/24px ${mono};
  color: #1d2430;
`
const Handle = styled.span.withConfig(clean('x', 'y'))`
  position: absolute;
  left: calc((100% - 10px) * ${(p) => p.x});
  top: calc((100% - 10px) * ${(p) => p.y});
  width: 10px;
  height: 10px;
  background: #000;
`
const Pointer = styled.svg`
  position: absolute;
  left: 918px;
  top: 84px;
  width: 18px;
  height: 28px;
`
const Player = styled.svg`
  position: absolute;
  right: -5px;
  bottom: 16px;
  width: 72px;
  height: 68px;
  opacity: 0.95;
  filter: drop-shadow(0 1px 2px rgba(0, 0, 0, 0.35));
`
const Side = styled.aside`
  width: 33px;
  padding-top: 8px;
`
const SideTab = styled.button`
  display: flex;
  flex-direction: column;
  align-items: center;
  gap: 7px;
  width: 31px;
  padding: 4px 0 8px;
  border: 1px solid #aaa;
  border-width: 0 2px 1px 0;
  border-top-right-radius: 7px;
  background: #e6e6e6;
  color: #333;
`
const SideName = styled.span`
  writing-mode: vertical-rl;
  font: 15px/18px "Noto Sans CJK SC", sans-serif;
`
const Strip = styled.div`
  flex-shrink: 0;
  height: 34px;
  display: flex;
  align-items: flex-start;
  background: #e6e6e6;
  border-top: 2px solid #b0b0b0;
`
const StripBtn = styled.button.withConfig(clean('w'))`
  width: ${(p) => p.w}px;
  height: 32px;
  padding-left: 4px;
  display: flex;
  align-items: center;
`
const Slant = styled.svg`
  width: 29px;
  height: 29px;
`
const DocTab = styled.div`
  height: 29px;
  display: flex;
  align-items: center;
  padding: 0 10px;
  border: 1px solid #aaa;
  border-width: 0 2px 1px 0;
  border-bottom-right-radius: 4px;
  background: #fff;
`
const DocName = styled.span`
  margin: 0 17px 0 13px;
  font-size: 16px;
  font-weight: bold;
  color: #1660bd;
`
const TabClose = styled.button`
  margin-left: 14px;
`
const Status = styled.footer`
  flex-shrink: 0;
  height: 34px;
  display: flex;
  align-items: center;
  justify-content: flex-end;
  background: #f0f0f0;
  border-top: 2px solid #ccc;
`
const StatusBtn = styled.button.withConfig(clean('w', 'active'))`
  width: ${(p) => p.w}px;
  height: 28px;
  display: flex;
  align-items: center;
  justify-content: center;
  gap: 6px;
  background: ${(p) => (p.active ? '#cbcbcb' : 'none')};
`
const StatusGap = styled.div`
  width: 13px;
`
const Percent = styled.label`
  width: 66px;
  padding-left: 14px;
  font-size: 15px;
  color: #444;
`
const Slider = styled.input`
  appearance: none;
  width: 122px;
  height: 20px;
  margin: 0 7px;
  background: linear-gradient(#aaa, #aaa) center / 100% 2px no-repeat;
  &::-webkit-slider-thumb {
    appearance: none;
    width: 7px;
    height: 20px;
    border: 1px solid #999;
    background: #e4e4e4;
  }
`
const Tasks = styled.nav`
  flex-shrink: 0;
  height: 43px;
  display: flex;
  padding-right: 6px;
  background: linear-gradient(90deg, #2a2324, #1f2028 14%, #1e2028 40%, #2a2020 50%, #43271d 54%, #2d2120 60%, #1c1f28 75%);
`
const Start = styled.button`
  width: 55px;
  display: flex;
  align-items: center;
  padding-left: 13px;
`
const Task = styled.button.withConfig(clean('active'))`
  width: ${(p) => (p.active ? 224 : 213)}px;
  margin-right: ${(p) => (p.active ? 7 : 14)}px;
  padding-left: ${(p) => (p.active ? 11 : 6)}px;
  display: flex;
  align-items: center;
  gap: 6px;
  border-bottom: 3px solid #76b0ea;
  background: ${(p) => (p.active ? '#4b4b4f' : 'none')};
  color: #fff;
  font-size: 17px;
  white-space: nowrap;
`
const Tray = styled.div`
  display: flex;
  align-items: center;
  border-right: 1px solid #666;
  padding-right: 11px;
  color: #fff;
`
const TrayBtn = styled.button.withConfig(clean('w'))`
  width: ${(p) => p.w}px;
  display: flex;
  align-items: center;
  justify-content: center;
  font-size: 17px;
`
const Clock = styled.time`
  margin-left: 12px;
  font-size: 16px;
`
